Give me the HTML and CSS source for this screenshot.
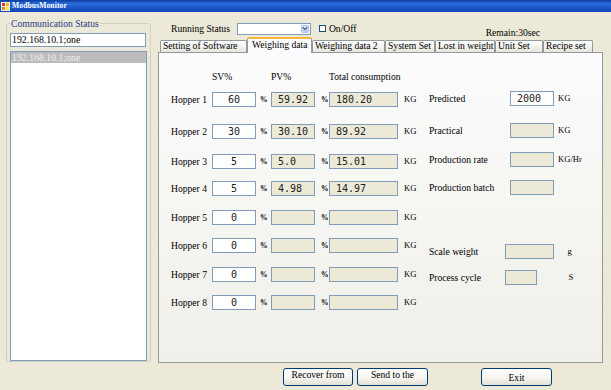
FILE: index.html
```html
<!DOCTYPE html>
<html>
<head>
<meta charset="utf-8">
<title>ModbusMonitor</title>
<link rel="stylesheet" href="styles.css">
</head>
<body>
<div class="window">
  <div class="titlebar">
    <svg class="appicon" width="9" height="9" viewBox="0 0 9 9">
      <rect x="0" y="0" width="9" height="9" fill="#f4f0e0"/>
      <rect x="1" y="1" width="3" height="3" fill="#e8401c"/>
      <rect x="5" y="1" width="3" height="3" fill="#f7b21c"/>
      <rect x="1" y="5" width="3" height="3" fill="#f08a1c"/>
      <rect x="5" y="5" width="3" height="3" fill="#fbe04c"/>
    </svg>
    <span class="title">ModbusMonitor</span>
  </div>
  <div class="client">
    <fieldset class="group">
      <legend class="group-label">Communication Status</legend>
      <div class="textbox">192.168.10.1;one</div>
      <div class="listbox">
        <div class="list-item selected">192.168.10.1;one</div>
      </div>
    </fieldset>

    <div class="workarea">
      <div class="statusbar">
        <span class="lbl">Running Status</span>
        <div class="combo">
          <span class="combo-btn">
            <svg width="7" height="5" viewBox="0 0 7 5"><path d="M0.8 1 L3.5 3.6 L6.2 1" fill="none" stroke="#4d6185" stroke-width="1.4"/></svg>
          </span>
        </div>
        <span class="checkbox"></span>
        <span class="lbl check-label">On/Off</span>
        <span class="lbl remain">Remain:30sec</span>
      </div>

      <div class="tabs">
        <div class="tab t1">Setting of Software</div>
        <div class="tab t2 active">Weighing data</div>
        <div class="tab t3">Weighing data 2</div>
        <div class="tab t4">System Set</div>
        <div class="tab t5">Lost in weight</div>
        <div class="tab t6">Unit Set</div>
        <div class="tab t7">Recipe set</div>
      </div>

      <div class="panel">
        <div class="hoppers">
          <span></span><span class="hdr">SV%</span><span></span><span class="hdr">PV%</span><span></span><span class="hdr">Total consumption</span><span></span>

          <span class="lbl row">Hopper 1</span><span class="field sv">60</span><span class="unit pct">%</span><span class="field ro">59.92</span><span class="unit pct2">%</span><span class="field ro">180.20</span><span class="unit kg">KG</span>

          <span class="lbl row">Hopper 2</span><span class="field sv">30</span><span class="unit pct">%</span><span class="field ro">30.10</span><span class="unit pct2">%</span><span class="field ro">89.92</span><span class="unit kg">KG</span>

          <span class="lbl row">Hopper 3</span><span class="field sv">5</span><span class="unit pct">%</span><span class="field ro">5.0</span><span class="unit pct2">%</span><span class="field ro">15.01</span><span class="unit kg">KG</span>

          <span class="lbl row">Hopper 4</span><span class="field sv">5</span><span class="unit pct">%</span><span class="field ro">4.98</span><span class="unit pct2">%</span><span class="field ro">14.97</span><span class="unit kg">KG</span>

          <span class="lbl row">Hopper 5</span><span class="field sv">0</span><span class="unit pct">%</span><span class="field ro"></span><span class="unit pct2">%</span><span class="field ro"></span><span class="unit kg">KG</span>

          <span class="lbl row">Hopper 6</span><span class="field sv">0</span><span class="unit pct">%</span><span class="field ro"></span><span class="unit pct2">%</span><span class="field ro"></span><span class="unit kg">KG</span>

          <span class="lbl row">Hopper 7</span><span class="field sv">0</span><span class="unit pct">%</span><span class="field ro"></span><span class="unit pct2">%</span><span class="field ro"></span><span class="unit kg">KG</span>

          <span class="lbl row">Hopper 8</span><span class="field sv">0</span><span class="unit pct">%</span><span class="field ro"></span><span class="unit pct2">%</span><span class="field ro"></span><span class="unit kg">KG</span>
        </div>

        <div class="side">
          <div class="side-grid">
            <span class="lbl row">Predicted</span><span class="field edit">2000</span><span class="unit side-unit">KG</span>
            <span class="lbl row">Practical</span><span class="field ro"></span><span class="unit side-unit">KG</span>
            <span class="lbl row">Production rate</span><span class="field ro"></span><span class="unit side-unit">KG/Hr</span>
            <span class="lbl row">Production batch</span><span class="field ro"></span><span></span>
          </div>
          <div class="side-grid2">
            <span class="lbl row">Scale weight</span><span class="field ro w49"></span><span class="unit g-unit">g</span>
            <span class="lbl row">Process cycle</span><span class="field ro w32"></span><span class="unit s-unit">S</span>
          </div>
        </div>
      </div>

      <div class="buttons">
        <button class="btn top-text b-recover">Recover from</button>
        <button class="btn top-text b-send">Send to the</button>
        <button class="btn b-exit">Exit</button>
      </div>
    </div>
  </div>
</div>
</body>
</html>
```

FILE: styles.css
```css
* { box-sizing: border-box; }

html, body {
  margin: 0;
  padding: 0;
}

body {
  width: 611px;
  height: 390px;
  overflow: hidden;
  background: #ece9d8;
  font-family: "Liberation Serif", "Times New Roman", serif;
  font-size: 9.6px;
  color: #000;
}

.window {
  width: 611px;
  height: 390px;
}

/* ---------- title bar ---------- */
.titlebar {
  height: 12px;
  display: flex;
  align-items: center;
  padding-left: 1px;
  background: linear-gradient(#0c3c9c 0%, #2a6bdc 30%, #1d58cb 60%, #1446b4 100%);
}

.appicon {
  display: block;
  flex: none;
}

.title {
  margin-left: 2px;
  color: #fff;
  font-family: "Liberation Serif", serif;
  font-weight: bold;
  font-size: 7.6px;
  line-height: 12px;
  letter-spacing: 0.1px;
}

/* ---------- client area ---------- */
.client {
  display: flex;
  align-items: flex-start;
}

.group {
  margin: 7px 0 0 6px;
  width: 145px;
  height: 343px;
  padding: 0 3px 0 3px;
  border: 1px solid #d0d0bf;
  border-radius: 3px;
  min-width: 0;
  display: flex;
  flex-direction: column;
}

.group-label {
  padding: 0 1px;
  line-height: 9px;
  color: #1e3a84;
  font-size: 9.6px;
}

.textbox {
  margin-top: 5px;
  width: 136px;
  height: 14px;
  border: 1px solid #7f9db9;
  background: #fff;
  padding-left: 1px;
  line-height: 12px;
  font-size: 9.8px;
}

.listbox {
  margin-top: 4px;
  width: 137px;
  height: 310px;
  border: 1px solid #7f9db9;
  background: #fff;
}

.list-item {
  height: 11px;
  line-height: 11px;
  padding-left: 1px;
  font-size: 9.8px;
}

.list-item.selected {
  background: #bcbcbc;
  color: #eeeeee;
}

/* ---------- work area ---------- */
.workarea {
  margin-left: 7px;
  width: 445px;
  display: flex;
  flex-direction: column;
}

.statusbar {
  margin-top: 10px;
  height: 13px;
  display: flex;
  align-items: center;
  padding-left: 13px;
}

.lbl {
  white-space: nowrap;
}

.combo {
  margin-left: 7px;
  width: 74px;
  height: 12px;
  border: 1px solid #7f9db9;
  background: #fff;
  display: flex;
  justify-content: flex-end;
  padding: 1px;
}

.combo-btn {
  width: 8px;
  height: 8px;
  border-radius: 1px;
  background: linear-gradient(#dfe8fd, #b6c9f5);
  border: 1px solid #b2c4ef;
  display: flex;
  align-items: center;
  justify-content: center;
}

.combo-btn svg {
  display: block;
}

.checkbox {
  margin-left: 8px;
  width: 7px;
  height: 7px;
  border: 1px solid #1c5180;
  background: #fff;
}

.check-label {
  margin-left: 3px;
}

.remain {
  margin-left: auto;
  margin-right: 63px;
  align-self: flex-end;
  margin-bottom: -3px;
}

/* ---------- tabs ---------- */
.tabs {
  margin-top: 2px;
  height: 16px;
  margin-bottom: -1px;
  padding-left: 2px;
  display: flex;
  align-items: flex-end;
  position: relative;
  z-index: 1;
}

.tab {
  height: 12px;
  margin-bottom: 1px;
  border: 1px solid #919b9c;
  border-bottom: none;
  border-radius: 2px 2px 0 0;
  background: linear-gradient(#ffffff, #f3f3ef 50%, #e6e5dd);
  line-height: 10px;
  padding-left: 2px;
  white-space: nowrap;
  overflow: hidden;
}

.tab.active {
  height: 16px;
  margin-bottom: 0;
  border-top: 2px solid #f4b53a;
  background: #fcfcfe;
  padding-left: 4px;
  line-height: 9px;
  padding-top: 1px;
}

.t1 { width: 87px; }
.t2 { width: 65px; }
.t3 { width: 73px; }
.t4 { width: 50px; }
.t5 { width: 60px; }
.t6 { width: 48px; }
.t7 { width: 50px; }

/* ---------- panel ---------- */
.panel {
  width: 445px;
  height: 311px;
  border: 1px solid #919b9c;
  background: linear-gradient(#fcfcfe, #f7f7f4 40%, #f0efe9);
  display: flex;
  align-items: flex-start;
  padding: 19px 0 0 12px;
}

.hoppers {
  display: grid;
  grid-template-columns: 41px 44px 15px 44px 14px 69px 31px;
  grid-template-rows: 20px 32px 30px 27px 29px 28px 29px 28px 15px;
  align-items: start;
}

.hdr {
  line-height: 10px;
  white-space: nowrap;
}

.row {
  height: 15px;
  line-height: 15px;
}

.field {
  height: 15px;
  border: 1px solid #7f9db9;
  background: #fff;
  font-family: "DejaVu Sans Mono", monospace;
  font-size: 10px;
  line-height: 13px;
  color: #222;
  white-space: nowrap;
}

.field.sv {
  text-align: center;
}

.field.ro {
  background: #ece9d7;
  padding-left: 6px;
}

.field.edit {
  padding-left: 6px;
}

.unit {
  height: 15px;
  line-height: 15px;
  white-space: nowrap;
  font-size: 8.6px;
}

.pct {
  padding-left: 4px;
  font-weight: bold;
  font-size: 7.5px;
}

.pct2 {
  padding-left: 6px;
  font-weight: bold;
  font-size: 7.5px;
}

.kg {
  padding-left: 6px;
}

.side {
  margin-top: 19px;
  display: flex;
  flex-direction: column;
}

.side-grid {
  display: grid;
  grid-template-columns: 81px 44px auto;
  grid-template-rows: 32px 29px 28px 15px;
  align-items: start;
}

.side-unit {
  padding-left: 4px;
}

.side-grid2 {
  margin-top: 49px;
  display: grid;
  grid-template-columns: 76px auto auto;
  grid-template-rows: 26px 15px;
  align-items: start;
}

.w49 { width: 49px; }
.w32 { width: 32px; }

.g-unit { padding-left: 5px; }
.s-unit { padding-left: 6px; }

/* ---------- buttons ---------- */
.buttons {
  margin-top: 5px;
  padding-left: 125px;
  display: flex;
}

.btn {
  height: 18px;
  width: 71px;
  border: 1px solid #003c74;
  border-radius: 3px;
  background: linear-gradient(#ffffff, #f4f3ee 60%, #e3e0d4);
  font-family: "Liberation Serif", serif;
  font-size: 9.6px;
  color: #000;
  padding: 0;
  margin: 0;
  line-height: 14px;
}

.top-text {
  line-height: 11px;
  padding-bottom: 5px;
}

.b-recover { width: 70px; }
.b-send { margin-left: 4px; }
.b-exit { margin-left: 53px; padding-top: 2px; }
```
